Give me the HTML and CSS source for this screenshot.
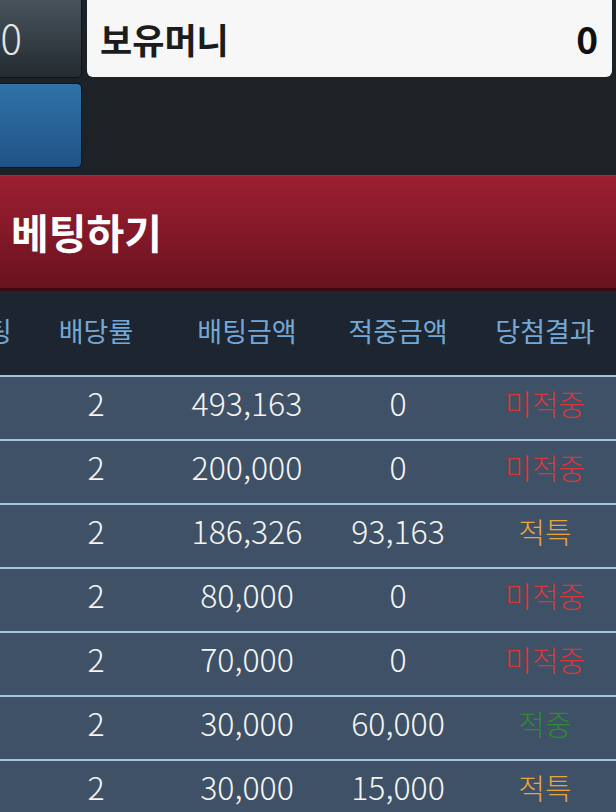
FILE: index.html
```html
<!DOCTYPE html>
<html lang="ko">
<head>
<meta charset="utf-8">
<title>베팅하기</title>
<link rel="stylesheet" href="styles.css">
</head>
<body>
<div class="page">
  <div class="top">
    <div class="side">
      <div class="btn btn-dark"><span class="btn-text">0</span></div>
      <div class="btn btn-blue"><span class="btn-text small">충전하</span></div>
    </div>
    <div class="money">
      <span class="money-label">보유머니</span>
      <span class="money-value">0</span>
    </div>
  </div>

  <div class="title-bar">
    <h1 class="title">베팅하기</h1>
  </div>

  <div class="table">
    <div class="row head">
      <div class="cell">베팅</div>
      <div class="cell">배당률</div>
      <div class="cell">배팅금액</div>
      <div class="cell">적중금액</div>
      <div class="cell">당첨결과</div>
    </div>
    <div class="row">
      <div class="cell"></div>
      <div class="cell num">2</div>
      <div class="cell num">493,163</div>
      <div class="cell num">0</div>
      <div class="cell lose">미적중</div>
    </div>
    <div class="row">
      <div class="cell"></div>
      <div class="cell num">2</div>
      <div class="cell num">200,000</div>
      <div class="cell num">0</div>
      <div class="cell lose">미적중</div>
    </div>
    <div class="row">
      <div class="cell"></div>
      <div class="cell num">2</div>
      <div class="cell num">186,326</div>
      <div class="cell num">93,163</div>
      <div class="cell special">적특</div>
    </div>
    <div class="row">
      <div class="cell"></div>
      <div class="cell num">2</div>
      <div class="cell num">80,000</div>
      <div class="cell num">0</div>
      <div class="cell lose">미적중</div>
    </div>
    <div class="row">
      <div class="cell"></div>
      <div class="cell num">2</div>
      <div class="cell num">70,000</div>
      <div class="cell num">0</div>
      <div class="cell lose">미적중</div>
    </div>
    <div class="row">
      <div class="cell"></div>
      <div class="cell num">2</div>
      <div class="cell num">30,000</div>
      <div class="cell num">60,000</div>
      <div class="cell win">적중</div>
    </div>
    <div class="row">
      <div class="cell"></div>
      <div class="cell num">2</div>
      <div class="cell num">30,000</div>
      <div class="cell num">15,000</div>
      <div class="cell special">적특</div>
    </div>
  </div>
</div>
</body>
</html>
```

FILE: styles.css
```css
html, body {
  margin: 0;
  padding: 0;
}
body {
  background: #1d2227;
  font-family: "Noto Sans CJK KR", "Noto Sans", sans-serif;
  overflow: hidden;
  width: 616px;
  height: 812px;
}
.page {
  width: 616px;
  overflow: hidden;
}
.top {
  display: flex;
  gap: 5px;
  margin-top: -10px;
  margin-left: -40px;
  margin-right: 4px;
}
.side {
  display: flex;
  flex-direction: column;
  gap: 5px;
  width: 122px;
  flex: none;
}
.btn {
  box-sizing: border-box;
  border: 1px solid #111417;
  border-radius: 5px;
  display: flex;
  align-items: center;
  justify-content: flex-end;
  padding-right: 59px;
}
.btn-dark {
  height: 88px;
  background: linear-gradient(#4c5862, #242b31);
  padding-top: 6px;
}
.btn-blue {
  height: 85px;
  background: linear-gradient(#3072a8, #1f5386);
  padding-right: 80px;
  padding-bottom: 6px;
}
.btn-text {
  color: #e4e6e8;
  font-size: 40px;
  font-weight: 300;
  line-height: 1;
}
.btn-text.small {
  font-size: 24px;
  color: #cfe0f0;
}
.money {
  flex: 1;
  height: 87px;
  box-sizing: border-box;
  background: #f7f7f7;
  border-radius: 6px;
  display: flex;
  align-items: center;
  justify-content: space-between;
  padding: 10px 14px 0 13px;
}
.money-label {
  font-size: 35px;
  font-weight: 700;
  color: #1c1c1c;
  line-height: 1;
}
.money-value {
  font-size: 37px;
  font-weight: 700;
  color: #111;
  line-height: 1;
}
.title-bar {
  margin-top: 7px;
  height: 116px;
  box-sizing: border-box;
  background: linear-gradient(#9d1f31, #6a1220);
  border-top: 1px solid #a8293a;
  border-bottom: 3px solid #3f0a0f;
  display: flex;
  align-items: center;
  padding-left: 11px;
}
.title {
  margin: 0;
  font-size: 41px;
  font-weight: 700;
  color: #ffffff;
  line-height: 1;
  padding-bottom: 2px;
}
.table {
  margin-left: -46px;
}
.row {
  display: grid;
  grid-template-columns: 66px 152px 150px 152px 142px;
  height: 64px;
  box-sizing: border-box;
  background: #3e5166;
  border-bottom: 2px solid #a6c3db;
  align-items: center;
  padding-bottom: 10px;
}
.row.head {
  height: 86px;
  background: #1d2630;
  padding-bottom: 6px;
}
.cell {
  text-align: center;
  font-size: 29px;
  font-weight: 300;
  color: #f4f4f4;
  line-height: 1;
  white-space: nowrap;
}
.cell.num {
  font-size: 32px;
  font-variant-numeric: proportional-nums;
  padding-bottom: 2px;
}
.head .cell {
  font-size: 27px;
  color: #74a8d8;
  font-weight: 400;
}
.lose {
  color: #dd3535;
}
.special {
  color: #e9a53c;
}
.win {
  color: #2f8a31;
}
```
